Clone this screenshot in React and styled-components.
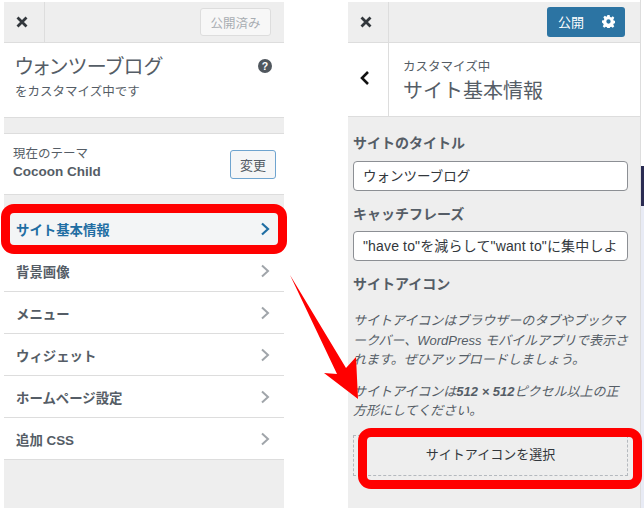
import React from 'react';
import styled, { createGlobalStyle } from 'styled-components';

const GlobalStyle = createGlobalStyle`
  html, body {
    margin: 0;
    padding: 0;
    background: #fff;
  }
  * { box-sizing: border-box; }
`;

const Page = styled.div`
  position: relative;
  width: 644px;
  height: 508px;
  overflow: hidden;
  display: flex;
  padding-left: 4px;
  font-family: "Liberation Sans", "Noto Sans CJK JP", sans-serif;
  color: #555d66;
`;

const Panel = styled.div`
  width: ${({ $width }) => $width}px;
  margin-left: ${({ $offset }) => $offset || 0}px;
  margin-top: 2px;
  height: 506px;
  background: #eee;
  display: flex;
  flex-direction: column;
  flex-shrink: 0;
`;

const TopBar = styled.div`
  height: 41px;
  display: flex;
  align-items: center;
  justify-content: space-between;
  border-bottom: 1px solid #ddd;
  flex-shrink: 0;
`;

const CloseCell = styled.div`
  width: 41px;
  height: 100%;
  padding-right: ${({ $shift }) => $shift}px;
  display: flex;
  align-items: center;
  justify-content: center;
  border-right: 1px solid #ddd;
`;

const PublishedButton = styled.div`
  width: 71px;
  height: 28px;
  margin-right: 13px;
  display: flex;
  align-items: center;
  justify-content: center;
  font-size: 12.5px;
  color: #a8adb2;
  background: #f7f7f7;
  border: 1px solid #ddd;
  border-radius: 3px;
`;

const PublishButton = styled.div`
  width: 78px;
  height: 30px;
  margin-right: 15px;
  margin-top: -1px;
  display: flex;
  align-items: center;
  background: #2c74a3;
  border-radius: 3px;
  color: #fff;
  font-size: 13px;
`;

const PublishLabel = styled.span`
  width: 48px;
  text-align: center;
`;

const TitleBlock = styled.div`
  height: 75px;
  background: #fff;
  padding: 11px 11px 0;
  display: flex;
  justify-content: space-between;
  border-bottom: 1px solid #ddd;
  flex-shrink: 0;
`;

const SiteName = styled.div`
  font-size: 20px;
  line-height: 26px;
  font-weight: 400;
  white-space: nowrap;
  font-feature-settings: "palt";
  letter-spacing: 0.5px;
`;

const SiteSub = styled.div`
  font-size: 12.5px;
  line-height: 18px;
  margin-top: 3px;
  white-space: nowrap;
`;

const HelpIcon = styled.svg`
  width: 14px;
  height: 14px;
  margin: 5px 1px 0 0;
`;

const ThemeBlock = styled.div`
  height: 62px;
  margin-top: 15px;
  background: #fff;
  border-top: 1px solid #ddd;
  border-bottom: 1px solid #ddd;
  padding: 0 8px 2px 9px;
  display: flex;
  align-items: center;
  justify-content: space-between;
  flex-shrink: 0;
`;

const ThemeLabel = styled.div`
  font-size: 12.5px;
  line-height: 17px;
`;

const ThemeName = styled.div`
  font-size: 13.5px;
  font-weight: 700;
  line-height: 17px;
`;

const ChangeButton = styled.div`
  width: 46px;
  height: 29px;
  margin-top: 3px;
  display: flex;
  align-items: center;
  justify-content: center;
  background: #f5f6f7;
  border: 1px solid #6fa4cf;
  border-radius: 3px;
  font-size: 13px;
`;

const Menu = styled.div`
  margin-top: 13px;
  display: flex;
  flex-direction: column;
`;

const MenuRow = styled.div`
  height: 42px;
  display: flex;
  align-items: center;
  justify-content: space-between;
  padding: 0 14px 0 12px;
  font-size: 13.4px;
  font-weight: 700;
  background: ${({ $active }) => ($active ? '#f3f5f6' : '#fff')};
  color: ${({ $active }) => ($active ? '#1f6ea3' : '#555d66')};
  border-bottom: 1px solid #ddd;
`;

const SectionHead = styled.div`
  height: 74px;
  display: flex;
  background: #fff;
  border-bottom: 1px solid #ddd;
  flex-shrink: 0;
`;

const BackCell = styled.div`
  width: 41px;
  padding: 0 7px 3px 0;
  display: flex;
  align-items: center;
  justify-content: center;
  border-right: 1px solid #ddd;
`;

const SectionTitles = styled.div`
  padding: 15px 0 0 14px;
`;

const SectionKicker = styled.div`
  font-size: 12.5px;
  line-height: 18px;
`;

const SectionName = styled.div`
  font-size: 20px;
  line-height: 26px;
  margin-top: 2px;
`;

const Controls = styled.div`
  padding: 16px 12px 0 5px;
`;

const FieldLabel = styled.div`
  font-size: 14px;
  font-weight: 700;
  line-height: 20px;
  height: 20px;
  margin-bottom: ${({ $gap }) => $gap}px;
`;

const TextBox = styled.div`
  height: 30px;
  margin-bottom: 13px;
  padding: 0 9px 2px;
  display: flex;
  align-items: center;
  background: #fff;
  border: 1px solid #8c8f94;
  border-radius: 4px;
  color: #32373c;
  font-size: ${({ $wide }) => ($wide ? '14px' : '13.5px')};
  letter-spacing: ${({ $wide }) => ($wide ? '0.15px' : '0')};
  white-space: nowrap;
  overflow: hidden;
`;

const Note = styled.p`
  margin: 0 0 12px;
  font-size: 13px;
  line-height: 19.5px;
  font-style: italic;
  color: #555d66;
  white-space: nowrap;
`;

const UploadBox = styled.div`
  height: 41px;
  margin-top: 14px;
  padding-bottom: 3px;
  display: flex;
  align-items: center;
  justify-content: center;
  border: 1px dashed #b4b9be;
  font-size: 13px;
  color: #32373c;
`;

const PreviewEdge = styled.div`
  flex: 1;
  display: flex;
  flex-direction: column;
  border-left: 1px solid #ddd;
`;

const EdgeBand = styled.div`
  height: ${({ $height }) => $height}px;
  flex: ${({ $height }) => ($height ? 'none' : 1)};
  background: ${({ $color }) => $color};
`;

const RedFrame = styled.div`
  position: absolute;
  left: ${({ $left }) => $left}px;
  top: ${({ $top }) => $top}px;
  width: ${({ $width }) => $width}px;
  height: ${({ $height }) => $height}px;
  border: 9px solid #ff0000;
  border-radius: 13px;
`;

const ArrowSvg = styled.svg`
  position: absolute;
  left: 0;
  top: 0;
`;

const CloseIcon = () => (
  <svg width="12" height="12" viewBox="0 0 12 12">
    <path d="M1.5 1.5 L10.5 10.5 M10.5 1.5 L1.5 10.5" stroke="#32373c" strokeWidth="2.8" fill="none" />
  </svg>
);

const Chevron = ({ color = '#a0a5aa', width = 2 }) => (
  <svg width="10" height="14" viewBox="0 0 10 14">
    <path d="M2 1.5 L8 7 L2 12.5" stroke={color} strokeWidth={width} fill="none" />
  </svg>
);

const GearIcon = () => (
  <svg width="13" height="13" viewBox="0 0 24 24" style={{ marginLeft: 7 }}>
    <path
      fill="#fff"
      fillRule="evenodd"
      d="M10 0h4l.7 3.4 2.3 1 2.9-1.9 2.8 2.8-1.9 2.9 1 2.3 3.2.5v4l-3.2.7-1 2.3 1.9 2.9-2.8 2.8-2.9-1.9-2.3 1-.7 3.2h-4l-.7-3.2-2.3-1-2.9 1.9-2.8-2.8 1.9-2.9-1-2.3L0 14v-4l3.3-.5 1-2.3-1.9-2.9L5.2 1.5l2.9 1.9 1.2-.9zM12 8a4 4 0 1 0 0 8 4 4 0 0 0 0-8z"
    />
  </svg>
);

const menuItems = ['背景画像', 'メニュー', 'ウィジェット', 'ホームページ設定', '追加 CSS'];

export default function App() {
  return (
    <Page>
      <GlobalStyle />

      <Panel $width={280}>
        <TopBar>
          <CloseCell $shift={4}>
            <CloseIcon />
          </CloseCell>
          <PublishedButton>公開済み</PublishedButton>
        </TopBar>
        <TitleBlock>
          <div>
            <SiteName>ウォンツーブログ</SiteName>
            <SiteSub>をカスタマイズ中です</SiteSub>
          </div>
          <HelpIcon viewBox="0 0 14 14">
            <circle cx="7" cy="7" r="7" fill="#50575e" />
            <text x="7" y="11" textAnchor="middle" fontSize="10.5" fontWeight="700" fill="#fff" fontFamily="Liberation Sans">?</text>
          </HelpIcon>
        </TitleBlock>
        <ThemeBlock>
          <div>
            <ThemeLabel>現在のテーマ</ThemeLabel>
            <ThemeName>Cocoon Child</ThemeName>
          </div>
          <ChangeButton>変更</ChangeButton>
        </ThemeBlock>
        <Menu>
          <MenuRow $active>
            サイト基本情報
            <Chevron color="#1f6ea3" width={2.2} />
          </MenuRow>
          {menuItems.map((item) => (
            <MenuRow key={item}>
              {item}
              <Chevron />
            </MenuRow>
          ))}
        </Menu>
      </Panel>

      <Panel $width={292} $offset={64}>
        <TopBar>
          <CloseCell $shift={5}>
            <CloseIcon />
          </CloseCell>
          <PublishButton>
            <PublishLabel>公開</PublishLabel>
            <GearIcon />
          </PublishButton>
        </TopBar>
        <SectionHead>
          <BackCell>
            <svg width="12" height="16" viewBox="0 0 12 16">
              <path d="M9 2 L3 8 L9 14" stroke="#111" strokeWidth="2.6" fill="none" />
            </svg>
          </BackCell>
          <SectionTitles>
            <SectionKicker>カスタマイズ中</SectionKicker>
            <SectionName>サイト基本情報</SectionName>
          </SectionTitles>
        </SectionHead>
        <Controls>
          <FieldLabel $gap={8}>サイトのタイトル</FieldLabel>
          <TextBox>ウォンツーブログ</TextBox>
          <FieldLabel $gap={7}>キャッチフレーズ</FieldLabel>
          <TextBox $wide>"have to"を減らして"want to"に集中しよ</TextBox>
          <FieldLabel $gap={17}>サイトアイコン</FieldLabel>
          <Note>
            サイトアイコンはブラウザーのタブやブックマ<br />
            ークバー、WordPress モバイルアプリで表示さ<br />
            れます。ぜひアップロードしましょう。
          </Note>
          <Note>
            サイトアイコンは<b>512 × 512</b>ピクセル以上の正<br />
            方形にしてください。
          </Note>
          <UploadBox>サイトアイコンを選択</UploadBox>
        </Controls>
      </Panel>

      <PreviewEdge>
        <EdgeBand $height={166} $color="#fff" />
        <EdgeBand $height={40} $color="#2a2b52" />
        <EdgeBand $color="#e8ebf5" />
      </PreviewEdge>

      <RedFrame $left={1} $top={204} $width={286} $height={50} />
      <RedFrame $left={358} $top={428} $width={284} $height={61} />
      <ArrowSvg width="644" height="508" viewBox="0 0 644 508">
        <polygon points="290,275 346,368 356,357 358,399 324,373 337,374" fill="#ff0000" />
      </ArrowSvg>
    </Page>
  );
}
